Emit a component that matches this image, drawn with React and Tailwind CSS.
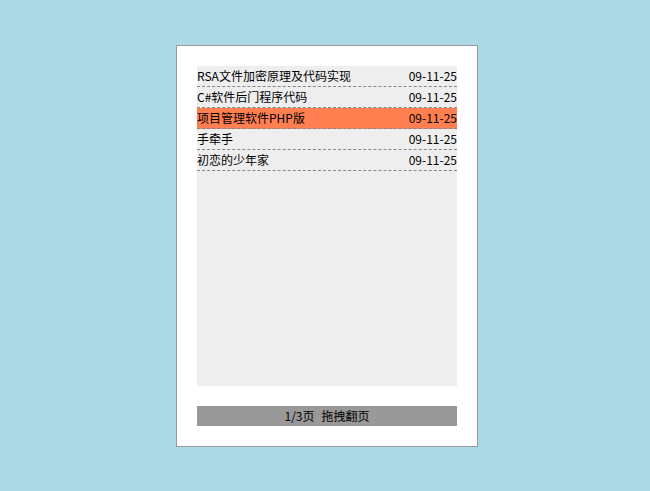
const items = [
  { title: "RSA文件加密原理及代码实现", date: "09-11-25" },
  { title: "C#软件后门程序代码", date: "09-11-25" },
  { title: "项目管理软件PHP版", date: "09-11-25", active: true },
  { title: "手牵手", date: "09-11-25" },
  { title: "初恋的少年家", date: "09-11-25" },
];

export default function App() {
  return (
    <div
      className="min-h-[491px] w-full bg-[#add8e6] pt-[45px] pl-[176px] text-[12px] text-black"
      style={{ fontFamily: '"Noto Sans CJK SC", "Liberation Sans", sans-serif' }}
    >
      <div className="w-[302px] border border-[#999] bg-white p-[20px]">
        <ul className="h-[320px] w-[260px] bg-[#eee]">
          {items.map((it) => (
            <li
              key={it.title}
              className={
                "flex h-[21px] items-center justify-between border-b border-dashed border-[#888] leading-[20px] " +
                (it.active ? "bg-[#ff7f50]" : "")
              }
            >
              <span>{it.title}</span>
              <span>{it.date}</span>
            </li>
          ))}
        </ul>
        <div className="mt-[20px] flex h-[20px] w-[260px] items-center justify-center gap-[7px] bg-[#999] leading-[20px]">
          <span>1/3页</span>
          <span>拖拽翻页</span>
        </div>
      </div>
    </div>
  );
}
